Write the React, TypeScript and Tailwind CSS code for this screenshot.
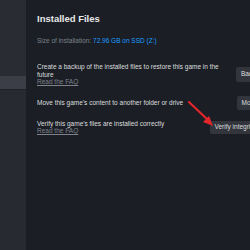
export default function App() {
  return (
    <div className="flex h-[250px] w-[250px] overflow-hidden bg-[#1b1e25] font-['Liberation_Sans',Arial,sans-serif]">
      {/* Sidebar */}
      <div className="flex w-[26px] shrink-0 flex-col bg-[#2a2c33]">
        <div className="h-[76px]" />
        <div className="h-[13px] bg-[#3b3e46]" />
        <div className="h-px bg-[#202228]" />
        <div className="flex-1 bg-[#282a31]" />
      </div>

      {/* Main */}
      <div className="relative flex-1 pl-[11px] pt-[13px]">
        <div className="w-[262px]">
          <h1 className="text-[9.5px] font-bold leading-[12px] text-[#e8e9ea]">Installed Files</h1>
          <div className="mt-[12px] text-[6.5px] leading-[8px] text-[#7d838b]">
            Size of installation: <span className="text-[#1a9fff]">72.96 GB on SSD (Z:)</span>
          </div>

          <div className="mt-[18px] flex flex-col gap-[10px]">
            <div className="flex items-center">
              <div className="w-[186px] text-[6.5px] leading-[7.5px] text-[#dcdedf]">
                <p>Create a backup of the installed files to restore this game in the future</p>
                <p className="text-[#7d838b] underline">Read the FAQ</p>
              </div>
              <button className="ml-auto h-[15px] whitespace-nowrap rounded-[2px] bg-[#32353c] px-[5px] text-[6.5px] text-[#dcdedf]">
                Backup game files
              </button>
            </div>

            <div className="flex items-center">
              <div className="w-[186px] text-[6.5px] leading-[7.5px] text-[#dcdedf]">
                <p>Move this game's content to another folder or drive</p>
              </div>
              <button className="ml-auto h-[14px] whitespace-nowrap rounded-[2px] bg-[#32353c] px-[5px] text-[6.5px] text-[#dcdedf]">
                Move install folder
              </button>
            </div>

            <div className="flex items-center">
              <div className="w-[186px] text-[6.5px] leading-[7.5px] text-[#dcdedf]">
                <p>Verify this game's files are installed correctly</p>
                <p className="text-[#7d838b] underline">Read the FAQ</p>
              </div>
              <button className="ml-auto h-[13px] whitespace-nowrap rounded-[2px] bg-[#32353c] px-[5px] text-[6.5px] text-[#dcdedf]">
                Verify integrity of game files
              </button>
            </div>
          </div>
        </div>

        {/* Annotation arrow */}
        <svg className="absolute left-0 top-0" width="224" height="250" viewBox="0 0 224 250">
          <line x1="163" y1="102" x2="183" y2="121" stroke="#e3262a" strokeWidth="2.2" strokeLinecap="round" />
          <polygon points="187,126 177,122 183,116" fill="#e3262a" />
        </svg>
      </div>
    </div>
  );
}
